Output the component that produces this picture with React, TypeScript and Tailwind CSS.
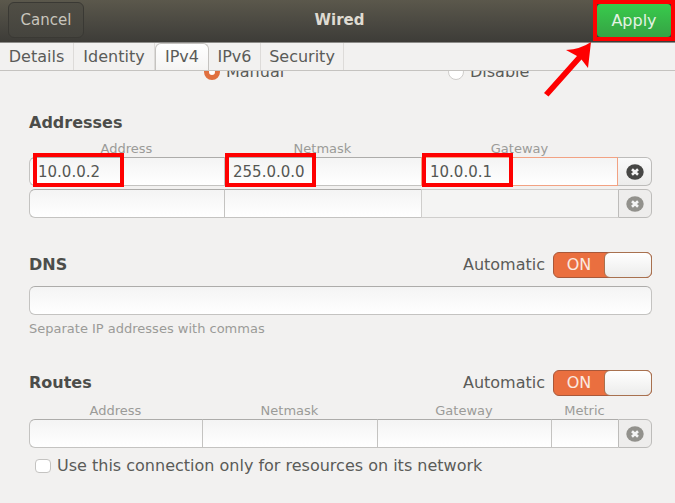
import { useState } from 'react';
import type { ReactNode } from 'react';

const TABS = [
  { name: 'Details', width: 'w-[74px]' },
  { name: 'Identity', width: 'w-[81px]' },
  { name: 'IPv4', width: 'w-[54px]' },
  { name: 'IPv6', width: 'w-[52px]' },
  { name: 'Security', width: 'w-[83px]' },
];

const ADDRESS_GRID = 'grid grid-cols-[195fr_197fr_197fr_34px]';
const ROUTE_GRID = 'grid grid-cols-[173fr_175fr_174fr_67fr_34px]';

const FIELD = 'block h-[29px] w-full min-w-0 bg-linear-to-b from-[#f4f4f4] to-white px-2 text-[15px] text-[#555753] outline-none';
const BORDER = 'border border-r-0 border-[#c4c3c1] border-t-[#adacaa]';

function ColumnLabels({ grid, labels }: { grid: string; labels: string[] }) {
  return (
    <div className={`${grid} h-4 text-center text-[13px] leading-4 text-[#9b9b98]`}>
      {labels.map((label) => (
        <span key={label}>{label}</span>
      ))}
    </div>
  );
}

function Highlight({ left }: { left: string }) {
  return (
    <span
      className={`${left} pointer-events-none absolute -top-1 h-[34px] w-[91px] border-4 border-[#fe0000]`}
    />
  );
}

function RemoveButton({ label, disabled }: { label: string; disabled?: boolean }) {
  return (
    <button
      type="button"
      aria-label={label}
      disabled={disabled}
      className="flex h-[29px] items-center justify-center rounded-r-md border border-l-0 border-[#bdbcba] bg-linear-to-b from-[#fafafa] to-[#ececeb] text-[#474745] disabled:border-l disabled:from-[#eeedec] disabled:to-[#eeedec] disabled:text-[#92918c]"
    >
      <svg width="18" height="16" viewBox="0 0 18 16" aria-hidden="true">
        <ellipse cx="9" cy="8" rx="8.7" ry="7.7" fill="currentColor" />
        <path d="M6 5.2 12 10.8M12 5.2 6 10.8" stroke="#f4f4f4" strokeWidth="2.6" />
      </svg>
    </button>
  );
}

function SectionHeader({ title, children }: { title: string; children?: ReactNode }) {
  return (
    <div className="flex h-[26px] items-center justify-between">
      <h2 className="font-bold text-[#4c4d4a]">{title}</h2>
      {children}
    </div>
  );
}

function AutomaticSwitch({ id }: { id: string }) {
  const [on, setOn] = useState(true);

  return (
    <div className="flex items-center gap-2">
      <label htmlFor={id}>Automatic</label>
      <button
        id={id}
        type="button"
        role="switch"
        aria-checked={on}
        onClick={() => setOn(!on)}
        className="flex h-[26px] w-[99px] items-stretch rounded-md border border-[#a8583a] bg-[#ea6f3f] leading-6 text-[#fbe9e0]"
      >
        <span className="flex-1">{on ? 'ON' : 'OFF'}</span>
        <span className="-my-px -mr-px w-12 rounded-md border border-[#a8714f] bg-linear-to-b from-white to-[#ececeb]" />
      </button>
    </div>
  );
}

export default function App() {
  const [tab, setTab] = useState('IPv4');

  return (
    <div className="relative min-h-screen overflow-hidden bg-[#f2f1f0] font-['DejaVu_Sans',sans-serif] text-base leading-6 text-[#5a5b58]">
      <header className="grid h-[43px] grid-cols-[1fr_auto_1fr] items-start border-b border-[#8d8c89] bg-linear-to-b from-[#5b584c] to-[#3d3c38]">
        <button
          type="button"
          className="mt-[2px] ml-2 h-9 w-[76px] rounded-md border border-[#3a3934] bg-linear-to-b from-[#504e45] to-[#45443e] text-[15px] text-[#c8c5bc]"
        >
          Cancel
        </button>
        <h1 className="pl-1 text-[15px] leading-10 font-bold text-[#dfdbd2]">Wired</h1>
        <div className="h-[41px] w-[82px] justify-self-end border-4 border-[#fe0000] bg-[#3d3c38]">
          <button
            type="button"
            className="h-full w-full rounded-sm bg-linear-to-b from-[#38cb4c] to-[#35a344] text-[#e4f3e4]"
          >
            Apply
          </button>
        </div>
      </header>

      <nav role="tablist" className="flex h-7 border-b border-[#c5c3c0]">
        {TABS.map(({ name, width }) => (
          <button
            key={name}
            type="button"
            role="tab"
            aria-selected={tab === name}
            onClick={() => setTab(name)}
            className={`${width} border-r border-[#dddbd9] leading-7 aria-selected:rounded-t-md aria-selected:border aria-selected:border-b-0 aria-selected:border-[#c5c3c0] aria-selected:bg-linear-to-b aria-selected:from-white aria-selected:to-[#f5f4f3] aria-selected:leading-[26px]`}
          >
            {name}
          </button>
        ))}
      </nav>

      <main className="overflow-hidden pr-[23px] pb-4 pl-[29px]">
        <div className="-mt-[11px] grid h-6 grid-cols-[175px_244fr_204fr] items-center">
          <label className="col-start-2 flex items-center gap-[6px]">
            <input
              type="radio"
              name="method"
              defaultChecked
              className="size-4 appearance-none rounded-full border border-[#d9623a] bg-white checked:border-5 checked:border-[#e0703f]"
            />
            Manual
          </label>
          <label className="flex items-center gap-[6px]">
            <input
              type="radio"
              name="method"
              className="size-4 appearance-none rounded-full border border-[#cfcdcb] bg-white checked:border-5 checked:border-[#e0703f]"
            />
            Disable
          </label>
        </div>

        <section className="mt-[26px]">
          <SectionHeader title="Addresses" />
          <div className="mt-[5px]">
            <ColumnLabels grid={ADDRESS_GRID} labels={['Address', 'Netmask', 'Gateway']} />
          </div>
          <div className={ADDRESS_GRID}>
            <div className="relative">
              <input aria-label="Address 1" defaultValue="10.0.0.2" className={`${FIELD} ${BORDER} rounded-l-md`} />
              <Highlight left="left-1" />
            </div>
            <div className="relative">
              <input aria-label="Netmask 1" defaultValue="255.0.0.0" className={`${FIELD} ${BORDER}`} />
              <Highlight left="left-px" />
            </div>
            <div className="relative">
              <input aria-label="Gateway 1" defaultValue="10.0.0.1" className={`${FIELD} border border-[#f2a283]`} />
              <Highlight left="left-px" />
            </div>
            <RemoveButton label="Remove address 1" />
          </div>
          <div className={`${ADDRESS_GRID} mt-[3px]`}>
            <input aria-label="Address 2" className={`${FIELD} ${BORDER} rounded-l-md`} />
            <input aria-label="Netmask 2" className={`${FIELD} ${BORDER}`} />
            <input
              aria-label="Gateway 2"
              disabled
              className="block h-[29px] w-full min-w-0 border border-r-0 border-[#cfcecc] bg-[#f4f4f3]"
            />
            <RemoveButton label="Remove address 2" disabled />
          </div>
        </section>

        <section className="mt-[34px]">
          <SectionHeader title="DNS">
            <AutomaticSwitch id="dns-automatic" />
          </SectionHeader>
          <input
            aria-label="DNS"
            aria-describedby="dns-hint"
            className={`${FIELD} mt-2 rounded-md border border-[#c4c3c1] border-t-[#adacaa]`}
          />
          <p id="dns-hint" className="mt-[6px] text-[13px] leading-4 text-[#9b9b98]">
            Separate IP addresses with commas
          </p>
        </section>

        <section className="mt-[33px]">
          <SectionHeader title="Routes">
            <AutomaticSwitch id="routes-automatic" />
          </SectionHeader>
          <div className="mt-[7px]">
            <ColumnLabels grid={ROUTE_GRID} labels={['Address', 'Netmask', 'Gateway', 'Metric']} />
          </div>
          <div className={ROUTE_GRID}>
            <input aria-label="Route address" className={`${FIELD} ${BORDER} rounded-l-md`} />
            <input aria-label="Route netmask" className={`${FIELD} ${BORDER}`} />
            <input aria-label="Route gateway" className={`${FIELD} ${BORDER}`} />
            <input aria-label="Route metric" className={`${FIELD} ${BORDER}`} />
            <RemoveButton label="Remove route" disabled />
          </div>
          <label className="mt-[6px] ml-[6px] flex items-center gap-[6px]">
            <input
              type="checkbox"
              className="h-[14px] w-4 appearance-none rounded-sm border border-[#c4c3c1] bg-white checked:bg-[#ea6f3f]"
            />
            Use this connection only for resources on its network
          </label>
        </section>
      </main>

      {/* arrow pointing at Apply */}
      <svg
        className="pointer-events-none absolute top-[42px] right-[83px]"
        width="48"
        height="56"
        viewBox="0 0 48 56"
        aria-hidden="true"
      >
        <path d="M47 0 44 26 37.5 17.5 4.5 54.5 0 51 33 14 22 8Q37 7 47 0Z" fill="#fe0000" />
      </svg>
    </div>
  );
}
